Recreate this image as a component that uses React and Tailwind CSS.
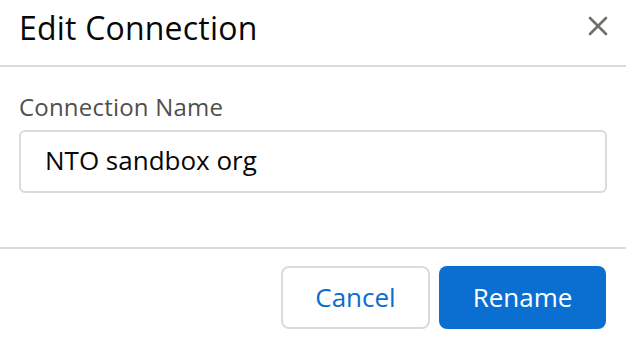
import React from "react";

const App = () => {
  return (
    <div className="w-[626px] h-[338px] bg-white flex flex-col" style={{ fontFamily: "'Open Sans', sans-serif" }}>
      <div className="h-[67px] flex items-center justify-between pl-[19px] pr-[16px] border-b-2 border-[#dddbda]">
        <h1 className="text-[32px] text-[#080707] leading-none -mt-[9px] tracking-[0.2px]">Edit Connection</h1>
        <button className="w-[26px] h-[26px] flex items-center justify-center -mt-[13px] mr-[-1px]">
          <svg width="20" height="20" viewBox="0 0 20 20" fill="none" stroke="#706e6b" strokeWidth="2.6" strokeLinecap="round">
            <path d="M2 2 L18 18 M18 2 L2 18" />
          </svg>
        </button>
      </div>
      <div className="h-[180px] px-[19px] pt-[28px]">
        <label className="block text-[24px] text-[#514f4d] leading-none tracking-[0.2px]">Connection Name</label>
        <div className="mt-[11px] h-[63px] border-2 border-[#dddbda] rounded-[6px] flex items-center px-[24px]">
          <span className="text-[26px] text-[#080707] leading-none -mt-[3px]">NTO sandbox org</span>
        </div>
      </div>
      <div className="border-t-2 border-[#dddbda] flex-1 flex items-start justify-end gap-[9px] pr-[20px] pt-[17px]">
        <button className="w-[149px] h-[63px] border-2 border-[#dddbda] rounded-[8px] bg-white text-[#0b6ccf] text-[26px]">
          Cancel
        </button>
        <button className="w-[167px] h-[63px] rounded-[8px] bg-[#0b6fd1] text-white text-[26px]">
          Rename
        </button>
      </div>
    </div>
  );
};

export default App;
